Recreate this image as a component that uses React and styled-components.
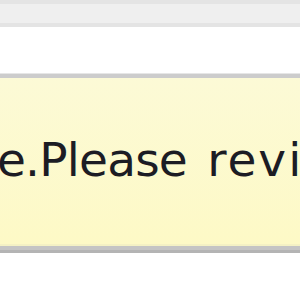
import React from "react";
import styled, { createGlobalStyle } from "styled-components";

const Global = createGlobalStyle`
  html, body { margin: 0; padding: 0; background: #ffffff; }
  body { width: 300px; height: 300px; overflow: hidden; }
`;

const Page = styled.div`
  display: flex;
  flex-direction: column;
  width: 300px;
  height: 300px;
  overflow: hidden;
  background: #ffffff;
`;

const Toolbar = styled.div`
  height: 19px;
  flex: none;
  background: #efefef;
  border-top: 4px solid #e4e4e4;
  border-bottom: 4px solid #e4e4e4;
`;

const Field = styled.div`
  height: 46px;
  flex: none;
  background: #ffffff;
  border-bottom: 1px solid #e6e6e6;
`;

const Notice = styled.div`
  flex: none;
  height: 166px;
  box-sizing: content-box;
  overflow: hidden;
  background: linear-gradient(#fcfad6, #fdf9c6);
  border-top: 4px solid #cccccc;
  border-bottom: 2px solid #f4f1c4;
`;

const Message = styled.p`
  margin: 58px 0 0 -3px;
  white-space: nowrap;
  font-family: "DejaVu Sans", Verdana, sans-serif;
  font-size: 47px;
  line-height: 47px;
  letter-spacing: -0.8px;
  word-spacing: 6px;
  color: #1c1c24;
`;

const Word = styled.span`
  letter-spacing: ${(p) => p.$track || "0px"};
`;

const Shadow = styled.div`
  flex: none;
  height: 4px;
  background: #c4c4c4;
  border-bottom: 3px solid #b4b4b4;
`;

export default function App() {
  return (
    <Page>
      <Global />
      <Toolbar />
      <Field />
      <Notice>
        <Message>
          e.Please <Word $track="2px">review the changes</Word>
        </Message>
      </Notice>
      <Shadow />
    </Page>
  );
}
